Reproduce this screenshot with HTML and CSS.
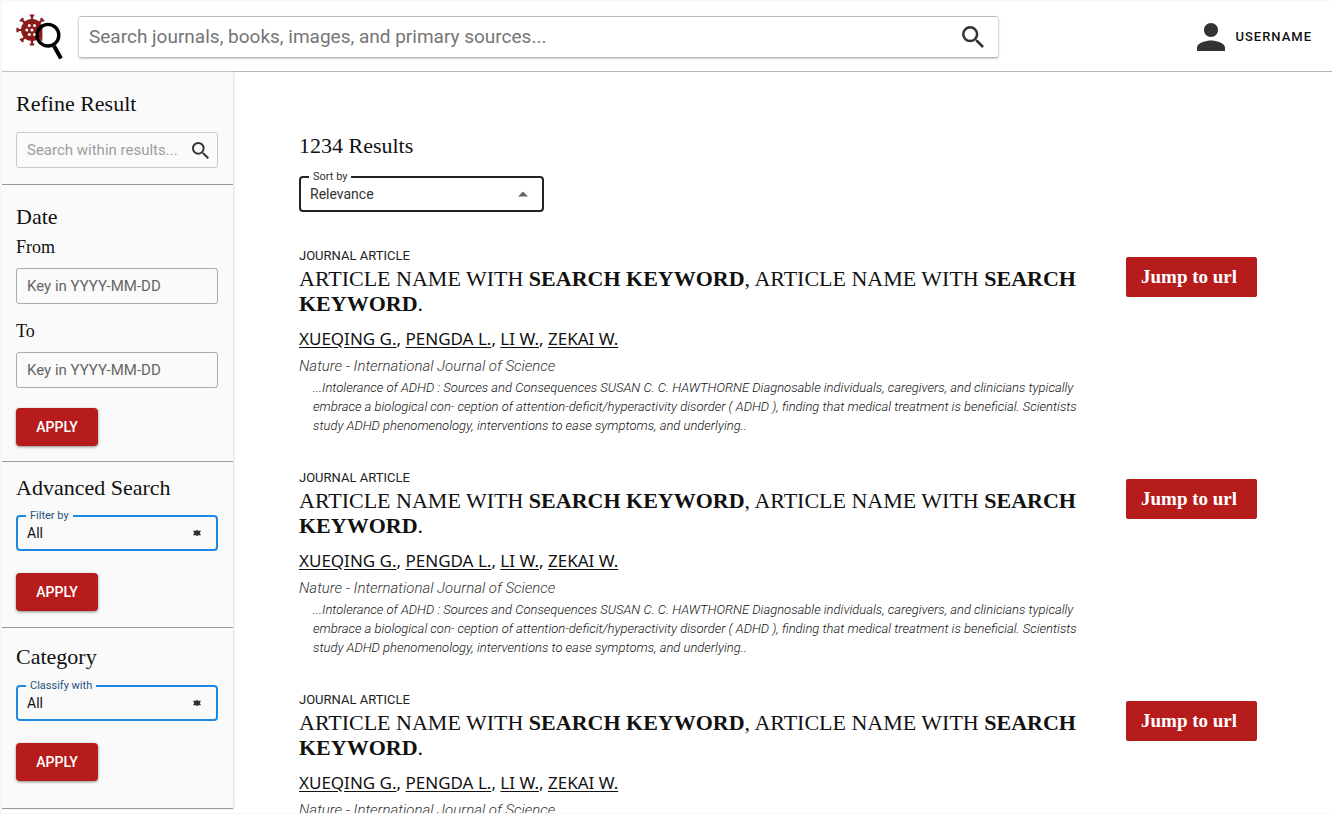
FILE: index.html
```html
<!DOCTYPE html>
<html lang="en">
<head>
<meta charset="utf-8">
<meta name="viewport" content="width=device-width, initial-scale=1">
<title>Search results</title>
<link rel="stylesheet" href="styles.css">
</head>
<body>
<svg class="defs" aria-hidden="true">
  <symbol id="search" viewBox="3 3 17.5 17.5"><path d="M15.5 14h-.79l-.28-.27A6.47 6.47 0 0 0 16 9.5 6.5 6.5 0 1 0 9.5 16c1.61 0 3.09-.59 4.23-1.57l.27.28v.79l5 4.99L20.49 19l-4.99-5zm-6 0a4.5 4.5 0 1 1 0-9 4.5 4.5 0 0 1 0 9z"/></symbol>
  <symbol id="both" viewBox="0 0 10 6"><path d="M1 .8h2.500L5 0l1.500.8H9L7.800 3 9 5.200H6.500L5 6l-1.500-.8H1L2.200 3z"/></symbol>
</svg>
<header class="topbar">
  <a class="logo" href="#" aria-label="Home">
    <svg viewBox="0 0 48 48" width="48" height="48">
      <g stroke="#8b1a1a" stroke-width="2.200" fill="none">
        <path id="spike" d="M16 8V2.500M13.800 2.500h4.400"/>
        <use href="#spike" transform="rotate(45 16 17)"/><use href="#spike" transform="rotate(90 16 17)"/>
        <use href="#spike" transform="rotate(135 16 17)"/><use href="#spike" transform="rotate(180 16 17)"/>
        <use href="#spike" transform="rotate(225 16 17)"/><use href="#spike" transform="rotate(270 16 17)"/>
        <use href="#spike" transform="rotate(315 16 17)"/>
      </g>
      <circle cx="16" cy="17" r="11" fill="#8b1a1a"/>
      <g fill="#fff"><circle cx="13.300" cy="12.500" r="1.500"/><circle cx="18.500" cy="12.500" r="1.500"/><circle cx="10.800" cy="17" r="1.500"/><circle cx="16" cy="17" r="1.500"/><circle cx="13.300" cy="21.500" r="1.500"/><circle cx="18.500" cy="21.500" r="1.500"/></g>
      <circle cx="32" cy="22.200" r="10.800" fill="#fff"/>
      <path d="M22 17a10.500 10.500 0 0 1 4.400-4v15.500a10 10 0 0 1-4.400-11.500z" fill="#8b1a1a"/>
      <circle cx="32" cy="22.200" r="10.800" fill="none" stroke="#000" stroke-width="3.400"/>
      <path d="M38 33L45 45.500" stroke="#000" stroke-width="4"/>
    </svg>
  </a>
  <form class="search">
    <input type="search" aria-label="Search" placeholder="Search journals, books, images, and primary sources...">
    <button type="button" aria-label="Search"><svg><use href="#search"/></svg></button>
  </form>
  <a class="user" href="#">
    <svg viewBox="4 4 16 16"><path d="M12 12c2.210 0 4-1.790 4-4s-1.790-4-4-4-4 1.790-4 4 1.790 4 4 4zm0 2c-2.670 0-8 1.340-8 4v2h16v-2c0-2.660-5.330-4-8-4z"/></svg>
    <span>USERNAME</span>
  </a>
</header>
<div class="body">
  <aside class="sidebar">
    <section class="panel">
      <h2>Refine Result</h2>
      <div class="field within">
        <input type="search" aria-label="Search within results" placeholder="Search within results...">
        <button type="button" aria-label="Search within results"><svg><use href="#search"/></svg></button>
      </div>
    </section>
    <section class="panel date">
      <h2>Date</h2>
      <label for="from">From</label>
      <div class="field"><input id="from" type="text" placeholder="Key in YYYY-MM-DD"></div>
      <label for="to">To</label>
      <div class="field"><input id="to" type="text" placeholder="Key in YYYY-MM-DD"></div>
      <button class="apply" type="button">APPLY</button>
    </section>
    <section class="panel advanced">
      <h2>Advanced Search</h2>
      <div class="select">
        <label for="filter">Filter by</label>
        <select id="filter"><option>All</option></select>
        <svg class="arrows"><use href="#both"/></svg>
      </div>
      <button class="apply" type="button">APPLY</button>
    </section>
    <section class="panel category">
      <h2>Category</h2>
      <div class="select">
        <label for="classify">Classify with</label>
        <select id="classify"><option>All</option></select>
        <svg class="arrows"><use href="#both"/></svg>
      </div>
      <button class="apply" type="button">APPLY</button>
    </section>
  </aside>
  <main class="results">
    <h1>1234 Results</h1>
    <div class="select sort">
      <label for="sort">Sort by</label>
      <select id="sort"><option>Relevance</option></select>
      <svg class="arrows" viewBox="0 0 10 6"><path d="M0 5.500L5 .5l5 5z"/></svg>
    </div>
    <article class="result">
      <div class="text">
        <p class="kind">JOURNAL ARTICLE</p>
        <h3>ARTICLE NAME WITH <b>SEARCH KEYWORD</b>, ARTICLE NAME WITH <b>SEARCH KEYWORD</b>.</h3>
        <p class="authors"><a href="#">XUEQING G.</a>, <a href="#">PENGDA L.</a>, <a href="#">LI W.</a>, <a href="#">ZEKAI W.</a></p>
        <p class="journal">Nature - International Journal of Science</p>
        <p class="abstract">...Intolerance of ADHD : Sources and Consequences SUSAN C. C. HAWTHORNE Diagnosable individuals, caregivers, and clinicians typically embrace a biological con- ception of attention-deficit/hyperactivity disorder ( ADHD ), finding that medical treatment is beneficial. Scientists study ADHD phenomenology, interventions to ease symptoms, and underlying..</p>
      </div>
      <a class="jump" href="#">Jump to url</a>
    </article>
    <article class="result">
      <div class="text">
        <p class="kind">JOURNAL ARTICLE</p>
        <h3>ARTICLE NAME WITH <b>SEARCH KEYWORD</b>, ARTICLE NAME WITH <b>SEARCH KEYWORD</b>.</h3>
        <p class="authors"><a href="#">XUEQING G.</a>, <a href="#">PENGDA L.</a>, <a href="#">LI W.</a>, <a href="#">ZEKAI W.</a></p>
        <p class="journal">Nature - International Journal of Science</p>
        <p class="abstract">...Intolerance of ADHD : Sources and Consequences SUSAN C. C. HAWTHORNE Diagnosable individuals, caregivers, and clinicians typically embrace a biological con- ception of attention-deficit/hyperactivity disorder ( ADHD ), finding that medical treatment is beneficial. Scientists study ADHD phenomenology, interventions to ease symptoms, and underlying..</p>
      </div>
      <a class="jump" href="#">Jump to url</a>
    </article>
    <article class="result">
      <div class="text">
        <p class="kind">JOURNAL ARTICLE</p>
        <h3>ARTICLE NAME WITH <b>SEARCH KEYWORD</b>, ARTICLE NAME WITH <b>SEARCH KEYWORD</b>.</h3>
        <p class="authors"><a href="#">XUEQING G.</a>, <a href="#">PENGDA L.</a>, <a href="#">LI W.</a>, <a href="#">ZEKAI W.</a></p>
        <p class="journal">Nature - International Journal of Science</p>
      </div>
      <a class="jump" href="#">Jump to url</a>
    </article>
  </main>
</div>
</body>
</html>
```
FILE: styles.css
```css
* { box-sizing: border-box; }
body {
  margin: 0;
  height: 100vh;
  display: flex;
  flex-direction: column;
  overflow: hidden;
  border: solid #f7f7f7;
  border-width: 1px 0 1px 2px;
  background: #fff;
  color: #111;
  font-family: Roboto, "Liberation Sans", sans-serif;
}
h1, h2, h3, p { margin: 0; font-weight: 400; }
h1, h2, h3, .date label, .jump { font-family: "Liberation Serif", serif; }
h1, h2 { font-size: 22px; line-height: 28px; }
input, select, button { font: inherit; color: inherit; }
button { border: 0; padding: 0; background: none; cursor: pointer; }
.defs { display: none; }

.topbar {
  flex: none;
  display: flex;
  align-items: center;
  height: 71px;
  padding: 1px 20px 0 14px;
  border-bottom: 1px solid #b5b5b5;
}
.logo { display: flex; margin-right: 14px; }
.search {
  flex: 0 1 921px;
  height: 42px;
  display: flex;
  align-items: center;
  padding: 0 14px 0 10px;
  border: 1px solid #dadada;
  border-top-color: #bbb;
  border-bottom-color: #bbb;
  border-radius: 4px;
  box-shadow: 0 1px 2px #ccc;
}
.search input {
  flex: 1;
  border: 0;
  padding: 0;
  outline: 0;
  background: none;
  font-size: 19px;
}
.search input::placeholder { color: #757575; }
.search svg { display: block; width: 22px; height: 22px; fill: #333; }
.user {
  display: flex;
  align-items: center;
  gap: 10px;
  margin-left: auto;
  color: #111;
  font-size: 13px;
  font-weight: 500;
  letter-spacing: 1px;
  text-decoration: none;
}
.user svg { width: 28px; height: 28px; fill: #333; }

.body { flex: 1; display: flex; min-height: 0; }
.sidebar {
  flex: 0 0 231px;
  align-self: flex-start;
  background: #fafafa;
  box-shadow: 1px 0 2px #ddd;
}
.panel { padding: 18px 15px 16px 14px; border-bottom: 1px solid #999; }
.panel h2 { margin-bottom: 14px; }
.field {
  display: flex;
  align-items: center;
  height: 36px;
  padding: 0 10px;
  border: 1px solid #aaa;
  border-radius: 3px;
}
.field input {
  flex: 1;
  width: 100%;
  min-width: 0;
  padding: 0;
  border: 0;
  outline: 0;
  background: none;
  font-size: 15px;
}
.field input::placeholder { color: #666; }
.within { border-color: #c9c9c9; padding-right: 8px; }
.within input::placeholder { color: #9e9e9e; }
.within svg { display: block; width: 17px; height: 17px; fill: #333; }
.panel.date { padding-bottom: 15px; }
.date h2 { margin-bottom: 4px; }
.date label { display: block; margin-bottom: 9px; font-size: 18px; line-height: 24px; }
.date .field + label { margin-top: 15px; }
.apply {
  display: block;
  width: 82px;
  height: 38px;
  margin-top: 22px;
  border-radius: 4px;
  background: #b71c1c;
  box-shadow: 0 1px 3px #888;
  color: #fff;
  font-size: 14px;
  font-weight: 500;
}
.date .apply { margin-top: 20px; }
.panel.advanced { padding-top: 12px; }
.advanced h2 { margin-bottom: 13px; }
.panel.category { padding: 15px 15px 27px 14px; }

.select { position: relative; color: #111; }
.select label {
  position: absolute;
  top: -6px;
  left: 10px;
  padding: 0 4px;
  background: #fafafa;
  color: #24527a;
  font-size: 11px;
  line-height: 14px;
}
.select select {
  display: block;
  width: 100%;
  height: 36px;
  padding: 0 9px;
  border: 2px solid #1e88e5;
  border-radius: 4px;
  appearance: none;
  background: none;
  font-size: 14px;
}
.arrows {
  position: absolute;
  top: 15px;
  right: 16px;
  width: 10px;
  height: 6px;
  fill: #333;
  pointer-events: none;
}

.results { flex: 1; min-width: 0; padding: 60px 75px 0 66px; }
.sort { width: 245px; margin: 16px 0 35px; }
.sort label { background: #fff; color: #333; }
.sort select { border-color: #222; color: #333; }
.sort .arrows { fill: #666; }
.result {
  display: grid;
  grid-template-columns: 1fr 131px;
  gap: 34px;
  align-items: start;
  margin-bottom: 34px;
}
.kind { margin-bottom: 1px; font-size: 13px; line-height: 18px; color: #222; }
.result h3 { font-size: 22px; line-height: 25px; }
.authors { margin-top: 9px; font: 17px/28px "Noto Sans", sans-serif; }
.authors a { color: inherit; text-underline-offset: 2px; }
.journal { margin-top: 1px; font-size: 15px; line-height: 24px; font-style: italic; font-weight: 300; color: #333; }
.abstract { padding-left: 14px; font-size: 13px; line-height: 19px; font-style: italic; font-weight: 300; color: #111; }
.jump {
  height: 40px;
  margin-top: 10px;
  padding-left: 15px;
  border-radius: 2px;
  background: #b71c1c;
  color: #fff;
  font-size: 19px;
  font-weight: 700;
  line-height: 40px;
  text-decoration: none;
}
```
